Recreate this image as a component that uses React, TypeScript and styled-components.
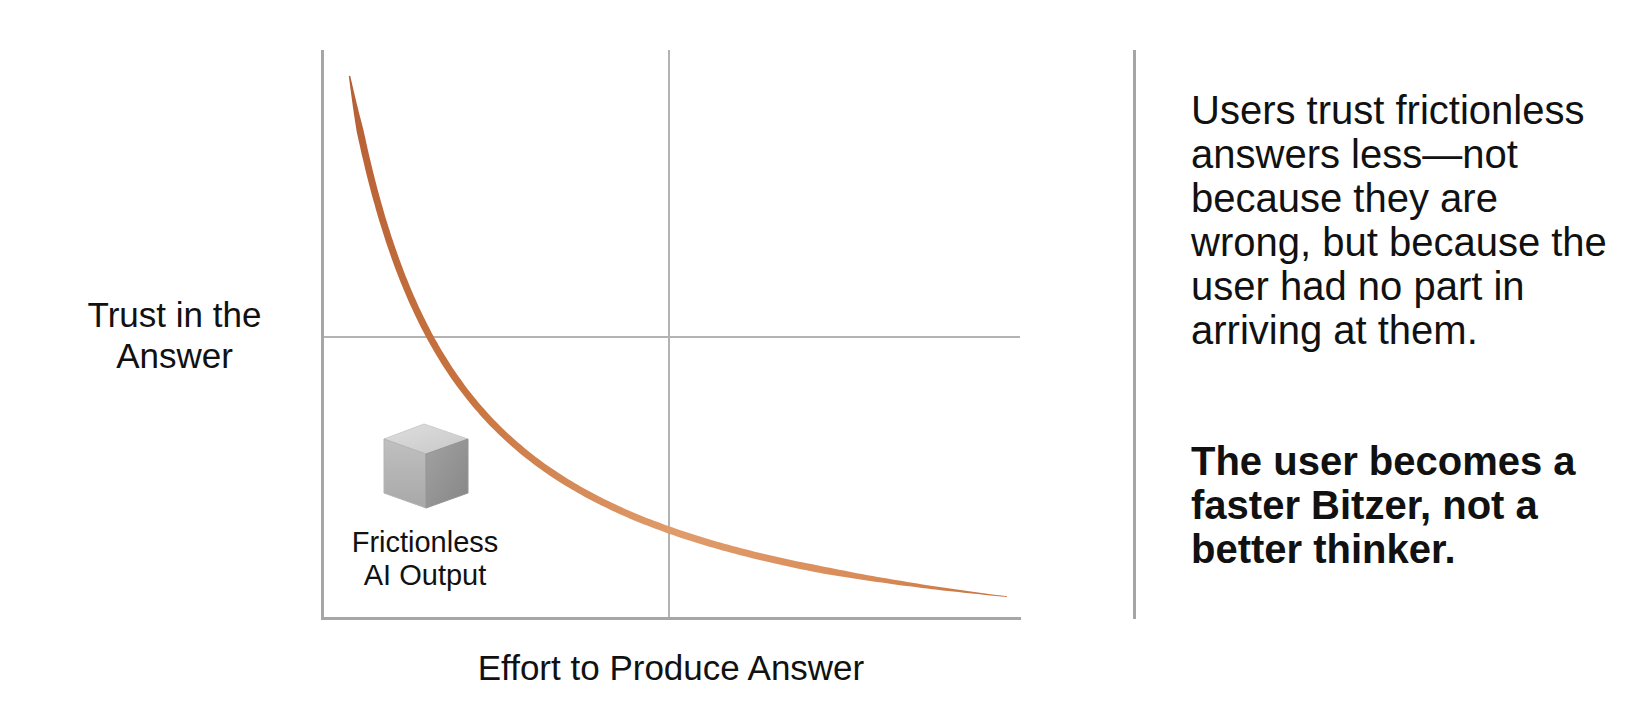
import React, { useMemo } from 'react';
import styled, { createGlobalStyle } from 'styled-components';

const GlobalStyle = createGlobalStyle`
  html, body {
    margin: 0;
    padding: 0;
    background: #ffffff;
  }
  body {
    font-family: "Liberation Sans", Arial, Helvetica, sans-serif;
    color: #111111;
  }
`;

type Pt = [number, number];

// trust curve, chart-local coords (chart box is 700 x 570): y = b - a / (x + c)
const curve = { a: 64035, b: 630.5, c: 77.4, x0: 28.5, x1: 686 };

const sampleCurve = (): Pt[] => {
  const out: Pt[] = [];
  const n = 240;
  for (let i = 0; i <= n; i++) {
    const u = i / n;
    // denser near the steep top
    const x = curve.x0 + (curve.x1 - curve.x0) * u * u;
    out.push([x, curve.b - curve.a / (x + curve.c)]);
  }
  return out;
};

const ribbonPath = (maxWidth: number) => {
  const pts = sampleCurve();
  const lens = [0];
  for (let i = 1; i < pts.length; i++) {
    lens.push(lens[i - 1] + Math.hypot(pts[i][0] - pts[i - 1][0], pts[i][1] - pts[i - 1][1]));
  }
  const total = lens[lens.length - 1];
  const left: Pt[] = [];
  const right: Pt[] = [];
  pts.forEach((p, i) => {
    const a = pts[Math.max(i - 1, 0)];
    const b = pts[Math.min(i + 1, pts.length - 1)];
    const dx = b[0] - a[0];
    const dy = b[1] - a[1];
    const d = Math.hypot(dx, dy) || 1;
    const nx = -dy / d;
    const ny = dx / d;
    const t = lens[i] / total;
    let k = 1;
    if (t < 0.06) k = 0.2 + 0.8 * (t / 0.06);
    else if (t > 0.8) k = 0.1 + 0.9 * ((1 - t) / 0.2);
    const w = (maxWidth * k) / 2;
    left.push([p[0] + nx * w, p[1] + ny * w]);
    right.push([p[0] - nx * w, p[1] - ny * w]);
  });
  const all = [...left, ...right.reverse()];
  return 'M' + all.map(([x, y]) => `${x.toFixed(1)} ${y.toFixed(1)}`).join(' L') + ' Z';
};

const Cube = () => (
  <CubeSvg width="86" height="88" viewBox="0 0 86 88">
    <defs>
      <linearGradient id="cubeTop" x1="0" y1="0" x2="1" y2="1">
        <stop offset="0" stopColor="#dedede" />
        <stop offset="1" stopColor="#c8c8c8" />
      </linearGradient>
      <linearGradient id="cubeLeft" x1="0" y1="0" x2="0" y2="1">
        <stop offset="0" stopColor="#c0c0c0" />
        <stop offset="1" stopColor="#a8a8a8" />
      </linearGradient>
      <linearGradient id="cubeRight" x1="0" y1="0" x2="1" y2="1">
        <stop offset="0" stopColor="#a2a2a2" />
        <stop offset="1" stopColor="#868686" />
      </linearGradient>
    </defs>
    <path d="M1 17 L41 2 L85 17 L43 32 Z" fill="url(#cubeTop)" stroke="#cccccc" strokeWidth="1" strokeLinejoin="round" />
    <path d="M1 17 L43 32 L43 86 L1 71 Z" fill="url(#cubeLeft)" stroke="#b4b4b4" strokeWidth="1" strokeLinejoin="round" />
    <path d="M43 32 L85 17 L85 71 L43 86 Z" fill="url(#cubeRight)" stroke="#949494" strokeWidth="1" strokeLinejoin="round" />
  </CubeSvg>
);

const TrustChart = () => {
  const ribbon = useMemo(() => ribbonPath(7), []);
  return (
    <ChartCanvas>
      <svg width="700" height="570" viewBox="0 0 700 570">
        <defs>
          <linearGradient id="copper" gradientUnits="userSpaceOnUse" x1="28" y1="23" x2="686" y2="545">
            <stop offset="0" stopColor="#b65f36" />
            <stop offset="0.35" stopColor="#c8743f" />
            <stop offset="0.65" stopColor="#e09c6b" />
            <stop offset="0.85" stopColor="#d98c59" />
            <stop offset="1" stopColor="#c77340" />
          </linearGradient>
        </defs>
        <line x1="348" y1="0" x2="348" y2="568" stroke="#b3b3b3" strokeWidth="2" />
        <line x1="0" y1="287" x2="699" y2="287" stroke="#b3b3b3" strokeWidth="2" />
        <line x1="1.5" y1="0" x2="1.5" y2="570" stroke="#a6a6a6" strokeWidth="3" />
        <line x1="0" y1="568.5" x2="700" y2="568.5" stroke="#a6a6a6" strokeWidth="3" />
        <path d={ribbon} fill="url(#copper)" />
      </svg>
      <CubeMarker>
        <Cube />
      </CubeMarker>
      <PointLabel>
        Frictionless
        <br />
        AI Output
      </PointLabel>
    </ChartCanvas>
  );
};

export default function App() {
  return (
    <>
      <GlobalStyle />
      <Page>
        <YAxisLabel>
          <span>
            Trust in the
            <br />
            Answer
          </span>
        </YAxisLabel>
        <ChartColumn>
          <TrustChart />
          <XAxisLabel>Effort to Produce Answer</XAxisLabel>
        </ChartColumn>
        <Divider />
        <TextColumn>
          <Paragraph>
            Users trust frictionless answers less—not because they are wrong, but because the user had no
            part in arriving at them.
          </Paragraph>
          <Paragraph $bold>The user becomes a faster Bitzer, not a better thinker.</Paragraph>
        </TextColumn>
      </Page>
    </>
  );
}

const Page = styled.main`
  width: 1650px;
  height: 706px;
  display: flex;
  align-items: flex-start;
  padding-top: 50px;
  box-sizing: border-box;
  background: #ffffff;
  overflow: hidden;
`;

const YAxisLabel = styled.div`
  width: 321px;
  height: 570px;
  flex-shrink: 0;
  box-sizing: border-box;
  padding-left: 28px;
  display: flex;
  align-items: center;
  justify-content: center;
  text-align: center;
  font-size: 35px;
  line-height: 41px;
`;

const ChartColumn = styled.div`
  width: 700px;
  flex-shrink: 0;
  display: flex;
  flex-direction: column;
  align-items: center;
`;

const ChartCanvas = styled.div`
  position: relative;
  width: 700px;
  height: 570px;
  & > svg {
    display: block;
  }
`;

const CubeMarker = styled.div`
  position: absolute;
  left: 62px;
  top: 372px;
`;

const CubeSvg = styled.svg`
  display: block;
`;

const PointLabel = styled.div`
  position: absolute;
  left: 4px;
  top: 476px;
  width: 200px;
  text-align: center;
  font-size: 29px;
  line-height: 33px;
`;

const XAxisLabel = styled.div`
  margin-top: 27px;
  font-size: 35px;
  line-height: 41px;
  text-align: center;
`;

const Divider = styled.div`
  width: 3px;
  height: 569px;
  margin-left: 112px;
  flex-shrink: 0;
  background: #a5a5a5;
`;

const TextColumn = styled.div`
  width: 425px;
  margin-left: 55px;
  padding-top: 38px;
  flex-shrink: 0;
`;

const Paragraph = styled.p<{ $bold?: boolean }>`
  margin: 0;
  font-size: 40px;
  line-height: 44px;
  font-weight: ${(p) => (p.$bold ? 700 : 400)};
  & + & {
    margin-top: 87px;
  }
`;
